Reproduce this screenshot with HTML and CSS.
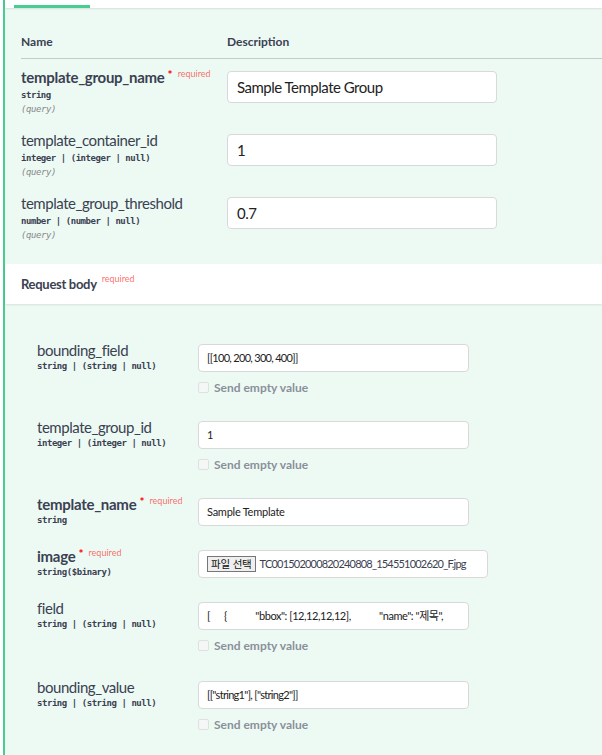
FILE: index.html
```html
<!DOCTYPE html>
<html lang="ko">
<head>
<meta charset="utf-8">
<link rel="stylesheet" href="styles.css">
</head>
<body>
<div class="opblock">
  <div class="tabbar"><div class="tab"></div></div>
  <div class="params">
    <div class="thead"><div class="col-name">Name</div><div>Description</div></div>
    <div class="prow">
      <div class="pname">
        <div class="name bold">template_group_name<span class="star">*</span><span class="reqtxt">required</span></div>
        <div class="type">string</div>
        <div class="in">(query)</div>
      </div>
      <div class="pinput">Sample Template Group</div>
    </div>
    <div class="prow">
      <div class="pname">
        <div class="name">template_container_id</div>
        <div class="type">integer | (integer | null)</div>
        <div class="in">(query)</div>
      </div>
      <div class="pinput">1</div>
    </div>
    <div class="prow">
      <div class="pname">
        <div class="name">template_group_threshold</div>
        <div class="type">number | (number | null)</div>
        <div class="in">(query)</div>
      </div>
      <div class="pinput">0.7</div>
    </div>
  </div>
  <div class="rbhead"><span class="rbtitle">Request body</span><span class="reqtxt rbreq">required</span></div>
  <div class="rbody">
    <div class="brow">
      <div class="bname">
        <div class="name">bounding_field</div>
        <div class="type">string | (string | null)</div>
      </div>
      <div class="bcell">
        <div class="binput tight">[[100, 200, 300, 400]]</div>
        <div class="empty"><span class="cb"></span>Send empty value</div>
      </div>
    </div>
    <div class="brow">
      <div class="bname">
        <div class="name">template_group_id</div>
        <div class="type">integer | (integer | null)</div>
      </div>
      <div class="bcell">
        <div class="binput">1</div>
        <div class="empty"><span class="cb"></span>Send empty value</div>
      </div>
    </div>
    <div class="brow">
      <div class="bname">
        <div class="name bold">template_name<span class="star">*</span><span class="reqtxt">required</span></div>
        <div class="type">string</div>
      </div>
      <div class="bcell">
        <div class="binput">Sample Template</div>
      </div>
    </div>
    <div class="brow">
      <div class="bname">
        <div class="name bold">image<span class="star">*</span><span class="reqtxt">required</span></div>
        <div class="type">string($binary)</div>
      </div>
      <div class="bcell">
        <div class="binput file"><span class="fbtn">파일 선택</span><span class="fname">TC001502000820240808_154551002620_F.jpg</span></div>
      </div>
    </div>
    <div class="brow tall">
      <div class="bname">
        <div class="name">field</div>
        <div class="type">string | (string | null)</div>
      </div>
      <div class="bcell">
        <div class="binput pre">[      {            "bbox": [12,12,12,12],            "name": "제목",</div>
        <div class="empty"><span class="cb"></span>Send empty value</div>
      </div>
    </div>
    <div class="brow">
      <div class="bname">
        <div class="name">bounding_value</div>
        <div class="type">string | (string | null)</div>
      </div>
      <div class="bcell">
        <div class="binput tight">[["string1"], ["string2"]]</div>
        <div class="empty"><span class="cb"></span>Send empty value</div>
      </div>
    </div>
  </div>
</div>
</body>
</html>
```
FILE: styles.css
```css
html, body {
  margin: 0;
  background: #fff;
}
body {
  font-family: Lato, "Noto Sans CJK KR", sans-serif;
  color: #3b4151;
}
.opblock {
  margin-left: 3px;
  border-left: 2px solid #49cc90;
  background: #edfaf4;
  min-height: 755px;
}
.tabbar {
  height: 8px;
  background: #fff;
  box-shadow: 0 1px 2px rgba(0, 0, 0, 0.1);
  display: flex;
  align-items: flex-end;
  padding-left: 9px;
  box-sizing: border-box;
}
.tab {
  width: 76px;
  height: 3px;
  background: #49cc90;
}
.params {
  padding-left: 16px;
}
.thead {
  display: flex;
  padding: 26px 0 8px;
  border-bottom: 1px solid rgba(59, 65, 81, 0.25);
  font-size: 12px;
  font-weight: 700;
  line-height: 16px;
}
.col-name {
  width: 206px;
}
.prow {
  display: flex;
  height: 63px;
}
.pname {
  width: 206px;
  padding-top: 9px;
}
.name {
  font-size: 15px;
  line-height: 18px;
  letter-spacing: -0.45px;
  white-space: nowrap;
}
.name.bold {
  font-weight: 700;
  letter-spacing: -0.28px;
}
.star {
  color: #f00;
  font-size: 12px;
  line-height: 0;
  position: relative;
  top: -4px;
  margin-left: 3px;
  letter-spacing: 0;
}
.reqtxt {
  color: rgba(255, 0, 0, 0.6);
  font-size: 9px;
  font-weight: 400;
  line-height: 0;
  letter-spacing: 0;
  position: relative;
  top: -6px;
  margin-left: 5px;
}
.type {
  font-family: "DejaVu Sans Mono", monospace;
  font-weight: 700;
  font-size: 9px;
  letter-spacing: -0.45px;
  line-height: 14px;
  margin-top: 2px;
  white-space: nowrap;
}
.in {
  font-family: "DejaVu Sans Mono", monospace;
  font-style: italic;
  font-size: 9px;
  letter-spacing: -0.4px;
  line-height: 14px;
  color: #888;
}
.pinput {
  margin-top: 12px;
  width: 270px;
  height: 32px;
  box-sizing: border-box;
  border: 1px solid #d9d9d9;
  border-radius: 4px;
  background: #fff;
  padding: 0 9px;
  font-size: 15px;
  letter-spacing: -0.5px;
  line-height: 30px;
  color: #222;
}
.rbhead {
  margin-top: 16px;
  height: 40px;
  background: rgba(255, 255, 255, 0.9);
  box-shadow: 0 1px 2px rgba(0, 0, 0, 0.1);
  display: flex;
  align-items: center;
  padding-left: 16px;
}
.rbtitle {
  font-size: 13px;
  font-weight: 700;
  letter-spacing: -0.3px;
}
.rbreq {
  top: -5px;
}
.rbody {
  padding: 37px 0 20px 32px;
}
.brow {
  display: flex;
  margin-bottom: 21px;
}
.brow.tall {
  margin-bottom: 23px;
}
.bname {
  width: 161px;
}
.bname .type {
  line-height: 12px;
  margin-top: 1px;
}
.bcell {
  padding-top: 3px;
}
.binput {
  width: 271px;
  height: 28px;
  box-sizing: border-box;
  border: 1px solid #d9d9d9;
  border-radius: 4px;
  background: #fff;
  padding: 0 8px;
  font-size: 11px;
  letter-spacing: -0.25px;
  line-height: 26px;
  color: #222;
  white-space: nowrap;
  overflow: hidden;
}
.binput.tight {
  letter-spacing: -0.7px;
}
.binput.pre {
  white-space: pre;
  letter-spacing: -0.45px;
}
.binput.file {
  width: 290px;
  display: flex;
  align-items: center;
  gap: 4px;
  letter-spacing: 0;
}
.fbtn {
  font-family: "Noto Sans CJK KR", sans-serif;
  font-size: 10.5px;
  line-height: 14px;
  height: 14px;
  padding: 0 3px;
  border: 1px solid #767676;
  background: #efefef;
  color: #111;
  letter-spacing: -0.2px;
}
.fname {
  font-size: 11px;
  letter-spacing: -0.8px;
  color: #3b4151;
}
.empty {
  display: flex;
  align-items: center;
  gap: 5px;
  height: 20px;
  margin-top: 5px;
  font-size: 12px;
  font-weight: 700;
  color: #8a9099;
}
.cb {
  width: 9px;
  height: 9px;
  border: 1px solid #dde2e0;
  border-radius: 2px;
  background: #f4f7f6;
}
```
